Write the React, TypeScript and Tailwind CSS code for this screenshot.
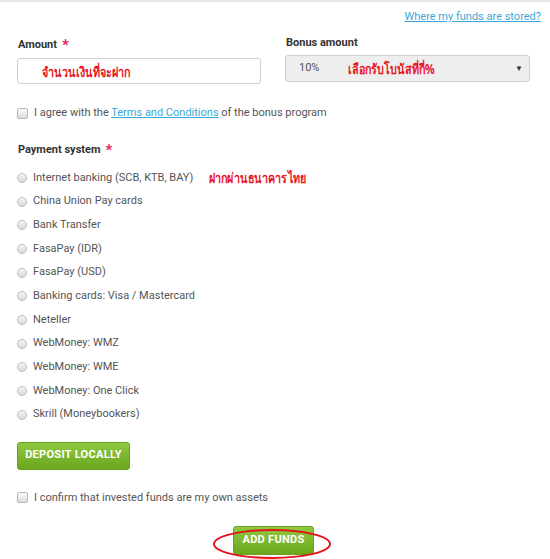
import React from 'react'

const methods = [
  'Internet banking (SCB, KTB, BAY)',
  'China Union Pay cards',
  'Bank Transfer',
  'FasaPay (IDR)',
  'FasaPay (USD)',
  'Banking cards: Visa / Mastercard',
  'Neteller',
  'WebMoney: WMZ',
  'WebMoney: WME',
  'WebMoney: One Click',
  'Skrill (Moneybookers)',
]

const Box = () => (
  <span className="h-[11px] w-[11px] shrink-0 rounded-[2px] border border-[#b5b5b5] bg-gradient-to-b from-[#fdfdfd] to-[#dcdcdc]" />
)

const Radio = () => (
  <span className="h-[10px] w-[10px] shrink-0 rounded-full border border-[#bdbdbd] bg-gradient-to-b from-[#f6f6f6] to-[#d8d8d8]" />
)

const Star = () => <span className="ml-[5px] text-[15px] leading-none text-[#e0245e]">*</span>

const thai = { fontFamily: '"Noto Sans", "DejaVu Sans", sans-serif' }

// red hand-written notes in the screenshot use a tall, narrow Thai face
const Note = ({ children, className = '' }: { children: React.ReactNode; className?: string }) => (
  <span
    className={`inline-block origin-left scale-x-[0.77] text-[14px] font-bold whitespace-nowrap text-[#e8151f] ${className}`}
    style={thai}
  >
    {children}
  </span>
)

export default function App() {
  return (
    <div
      className="relative h-[559px] w-[550px] overflow-hidden border-t-2 border-[#e6e6e6] bg-white text-[11px] text-[#555]"
      style={{ fontFamily: 'Roboto, "Liberation Sans", sans-serif' }}
    >
      <div className="flex justify-end pr-[9px] pt-[7px] leading-[16px]">
        <a className="text-[#3aa7d8] underline">Where my funds are stored?</a>
      </div>

      <div className="mt-[12px] flex gap-[24px] pl-[17px]">
        <div className="w-[244px]">
          <div className="flex items-center pl-[1px] font-bold leading-[16px] text-[#333]">
            Amount <Star />
          </div>
          <div className="mt-[5px] flex h-[26px] items-center rounded-[3px] border border-[#cfcfcf] bg-white pl-[24px]">
            <Note>จำนวนเงินที่จะฝาก</Note>
          </div>
        </div>
        <div className="-mt-[2px] w-[245px]">
          <div className="pl-[1px] font-bold leading-[16px] text-[#333]">Bonus amount</div>
          <div className="mt-[4px] flex h-[27px] items-center rounded-[3px] border border-[#cfcfcf] bg-[#eeeeee] pl-[13px] pr-[6px]">
            <span className="w-[49px] text-[#555]">10%</span>
            <Note>เลือกรับโบนัสที่กี่%</Note>
            <span className="ml-auto text-[8px] text-[#333]">▼</span>
          </div>
        </div>
      </div>

      <div className="mt-[21px] flex items-center gap-[6px] pl-[17px] leading-[16px]">
        <Box />
        <span>
          I agree with the <a className="text-[#3aa7d8] underline">Terms and Conditions</a> of the bonus program
        </span>
      </div>

      <div className="mt-[21px] flex items-center pl-[18px] font-bold leading-[16px] text-[#333]">
        Payment system <Star />
      </div>

      <div className="mt-[8px] pl-[17px]">
        {methods.map((m, i) => (
          <div key={m} className="flex h-[23.7px] items-center gap-[6px]">
            <Radio />
            <span>{m}</span>
            {i === 0 && <Note className="ml-[10px]">ฝากผ่านธนาคารไทย</Note>}
          </div>
        ))}
      </div>

      <div className="mt-[15px] pl-[17px]">
        <button className="h-[28px] w-[113px] rounded-[3px] border border-[#68a21f] bg-gradient-to-b from-[#8fc940] to-[#6aa71c] text-[11px] font-bold tracking-[0.3px] text-white">
          DEPOSIT LOCALLY
        </button>
      </div>

      <div className="mt-[20px] flex items-center gap-[6px] pl-[17px] leading-[16px]">
        <Box />
        <span>I confirm that invested funds are my own assets</span>
      </div>

      <div className="mt-[20px] flex pl-[233px]">
        <button className="h-[29px] w-[81px] rounded-[3px] border border-[#68a21f] bg-gradient-to-b from-[#8fc940] to-[#6aa71c] text-[11px] font-bold tracking-[0.3px] text-white">
          ADD FUNDS
        </button>
      </div>

      <svg className="absolute left-[210px] top-[525px]" width="124" height="34" viewBox="0 0 124 34">
        <ellipse cx="62" cy="17" rx="58" ry="14" fill="none" stroke="#e4141b" strokeWidth="2" />
      </svg>
    </div>
  )
}
